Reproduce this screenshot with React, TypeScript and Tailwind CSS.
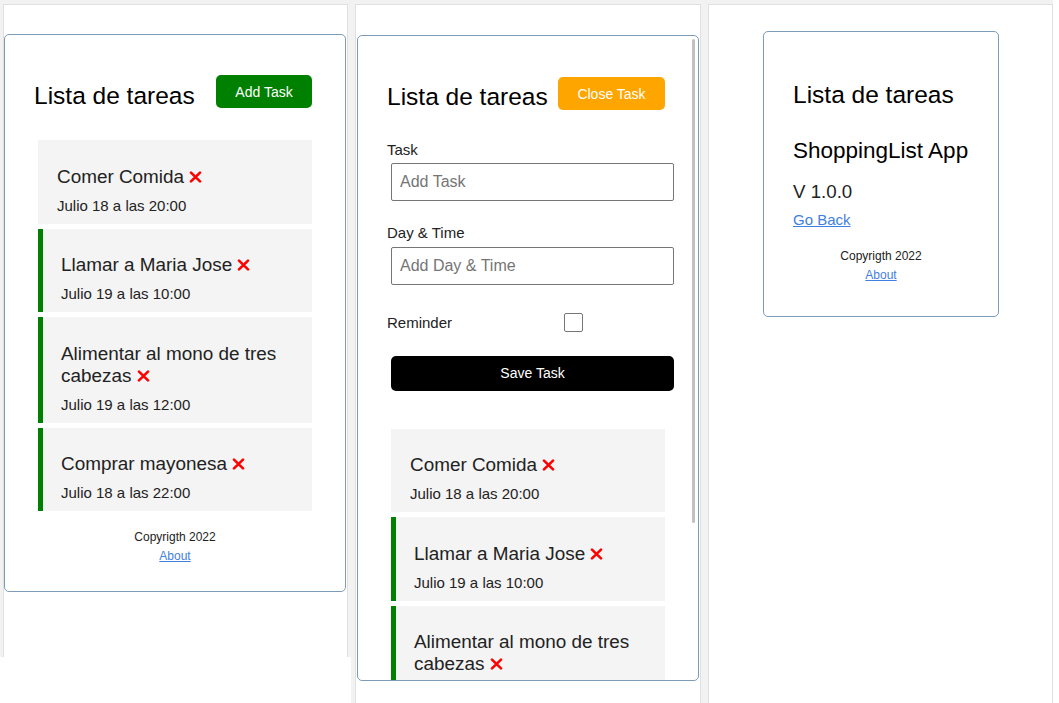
type Task = {
  id: number;
  text: string;
  day: string;
  reminder: boolean;
};

const tasks: Task[] = [
  { id: 1, text: "Comer Comida", day: "Julio 18 a las 20:00", reminder: false },
  { id: 2, text: "Llamar a Maria Jose", day: "Julio 19 a las 10:00", reminder: true },
  { id: 3, text: "Alimentar al mono de tres cabezas", day: "Julio 19 a las 12:00", reminder: true },
  { id: 4, text: "Comprar mayonesa", day: "Julio 18 a las 22:00", reminder: true },
];

function TimesIcon() {
  return (
    <svg width="13" height="12" viewBox="0 0 13 12" className="inline align-baseline">
      <path
        d="M2 1.6 L11 10.4 M11 1.6 L2 10.4"
        stroke="#ff0000"
        strokeWidth="2.6"
        strokeLinecap="round"
        fill="none"
      />
    </svg>
  );
}

function TaskItem({ task }: { task: Task }) {
  return (
    <div
      className={`ml-[4px] w-[274px] shrink-0 bg-[#f4f4f4] pt-[25.5px] pb-[9.75px] pr-[19px] ${
        task.reminder ? "border-l-[5px] border-[#008000] pl-[18px]" : "pl-[19px]"
      }`}
    >
      <h3 className="text-[18.9px] leading-[22px] text-[#222]">
        {task.text} <TimesIcon />
      </h3>
      <p className="mt-[9px] text-[15px] leading-[17.25px] text-[#222]">{task.day}</p>
    </div>
  );
}

function TaskList() {
  return (
    <div className="flex flex-col gap-[5px]">
      {tasks.map((t) => (
        <TaskItem key={t.id} task={t} />
      ))}
    </div>
  );
}

function Footer({ className = "" }: { className?: string }) {
  return (
    <footer className={`text-center text-[12px] leading-[14px] text-[#222] ${className}`}>
      <p>Copyrigth 2022</p>
      <p className="mt-[5px]">
        <a href="#" className="text-[#3f80e0] underline">
          About
        </a>
      </p>
    </footer>
  );
}

function Header({
  label,
  color,
  width,
  titleTop,
  buttonTop,
}: {
  label: string;
  color: string;
  width: string;
  titleTop: string;
  buttonTop: string;
}) {
  return (
    <header className="flex items-start justify-between">
      <h1 className={`${titleTop} text-[24.5px] leading-[28px] text-black`}>Lista de tareas</h1>
      <button
        className={`${buttonTop} ${color} ${width} mr-[4px] h-[33px] rounded-[5px] pt-[1px] text-center text-[14px] text-white`}
      >
        {label}
      </button>
    </header>
  );
}

function AddForm() {
  return (
    <form className="mt-[30.7px]">
      <label className="block text-[15px] leading-[17.25px] text-[#222]">Task</label>
      <input
        type="text"
        placeholder="Add Task"
        className="mt-[5px] ml-[4px] block h-[38px] w-[283px] rounded-[2px] border border-[#767676] pl-[8px] text-[16px] outline-none placeholder:text-[#757575]"
      />
      <label className="mt-[23px] block text-[15px] leading-[17.25px] text-[#222]">Day &amp; Time</label>
      <input
        type="text"
        placeholder="Add Day & Time"
        className="mt-[5.7px] ml-[4px] block h-[38px] w-[283px] rounded-[2px] border border-[#767676] pl-[8px] text-[16px] outline-none placeholder:text-[#757575]"
      />
      <div className="mt-[28px] flex h-[19px] items-center">
        <label className="w-[177px] text-[15px] leading-[17.25px] text-[#222]">Reminder</label>
        <input
          type="checkbox"
          className="h-[19px] w-[19px] appearance-none rounded-[2px] border border-[#767676] bg-white"
        />
      </div>
      <button
        type="button"
        className="mt-[23.7px] ml-[4px] block h-[35px] w-[283px] rounded-[5px] bg-black pt-[1px] text-center text-[14px] text-white"
      >
        Save Task
      </button>
    </form>
  );
}

export default function App() {
  return (
    <div className="flex h-[703px] w-[1059px] items-start overflow-hidden bg-white font-['Liberation_Sans',Arial,sans-serif]">
      {/* Screen 1: task list */}
      <div className="h-[657px] w-[351px] shrink-0 bg-[#f2f2f2] pt-[4px] pl-[3px] pr-[3px]">
        <div className="h-full border-x border-t border-[#e0e0e0] bg-white pt-[29px]">
          <div className="w-[342px] rounded-[5px] border border-[#7d9cba] px-[29px] pb-[27.6px]">
            <Header
              label="Add Task"
              color="bg-[#008000]"
              width="w-[96px]"
              titleTop="mt-[47px]"
              buttonTop="mt-[40px]"
            />
            <div className="mt-[30px]">
              <TaskList />
            </div>
            <Footer className="mt-[19.4px]" />
          </div>
        </div>
      </div>

      {/* Screen 2: add form open */}
      <div className="h-[703px] w-[354px] shrink-0 bg-[#f2f2f2] pt-[4px] pl-[4px] pr-[4px]">
        <div className="h-full border-x border-t border-[#e0e0e0] bg-white pt-[30px] pl-[1px]">
          <div className="relative h-[646px] w-[342px] overflow-hidden rounded-[5px] border border-[#7d9cba] px-[29px]">
            <Header
              label="Close Task"
              color="bg-[#ffa500]"
              width="w-[107px]"
              titleTop="mt-[47.4px]"
              buttonTop="mt-[41px]"
            />
            <div className="-mt-[1px]">
              <AddForm />
            </div>
            <div className="mt-[38px]">
              <TaskList />
            </div>
            {/* scrollbar thumb */}
            <div className="absolute top-[3px] left-[334px] h-[484px] w-[3px] rounded-full bg-[#c1c1c1]" />
          </div>
        </div>
      </div>

      {/* Screen 3: about */}
      <div className="h-[703px] w-[348px] shrink-0 bg-[#f2f2f2] pt-[4px] pl-[3px]">
        <div className="h-full w-[345px] border-x border-t border-[#e0e0e0] bg-white pt-[26px] pl-[54px]">
          <div className="w-[236px] rounded-[5px] border border-[#7d9cba] px-[29px] pb-[33.6px]">
            <h1 className="mt-[49px] text-[24.5px] leading-[28px] text-black">Lista de tareas</h1>
            <h4 className="mt-[29px] whitespace-nowrap text-[22.5px] leading-[26px] text-black">
              ShoppingList App
            </h4>
            <h4 className="mt-[17.2px] text-[18.72px] leading-[21.5px] text-[#222]">V 1.0.0</h4>
            <a href="#" className="mt-[8.6px] block w-fit text-[15px] leading-[17px] text-[#3f80e0] underline">
              Go Back
            </a>
            <Footer className="mt-[20.8px]" />
          </div>
        </div>
      </div>
    </div>
  );
}
